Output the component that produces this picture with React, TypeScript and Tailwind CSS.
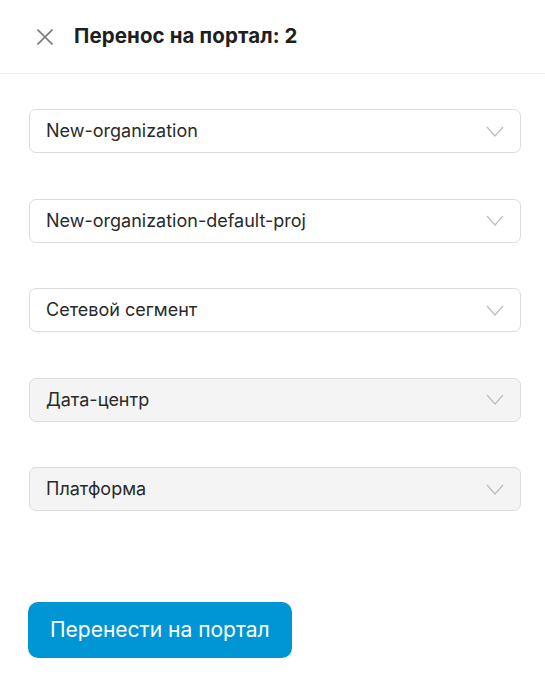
type Field = {
  label: string;
  disabled?: boolean;
};

const fields: Field[] = [
  { label: "New-organization" },
  { label: "New-organization-default-proj" },
  { label: "Сетевой сегмент" },
  { label: "Дата-центр", disabled: true },
  { label: "Платформа", disabled: true },
];

function Select({ label, disabled }: Field) {
  return (
    <div
      className={
        disabled
          ? "h-[44px] w-full rounded-[7px] border border-[#dcdcdc] bg-[#f4f4f4] flex items-center justify-between pl-[16px] pr-[16px]"
          : "h-[44px] w-full rounded-[7px] border border-[#dcdcdc] bg-white flex items-center justify-between pl-[16px] pr-[16px]"
      }
    >
      <span className="text-[18px] text-[#2a2a2a] leading-none">{label}</span>
      <svg width="18" height="11" viewBox="0 0 18 11" fill="none" className="shrink-0">
        <path d="M1 1l8 9 8-9" stroke="#bdbdbd" strokeWidth="1.2" />
      </svg>
    </div>
  );
}

function App() {
  return (
    <div className="min-h-[691px] w-[545px] bg-white font-['Inter','Liberation_Sans',sans-serif]">
      <div className="h-[74px] border-b border-[#ededed] flex items-center pl-[37px] gap-[21px]">
        <svg width="16" height="16" viewBox="0 0 16 16" fill="none" className="shrink-0">
          <path d="M0.5 0.5l15 15M15.5 0.5l-15 15" stroke="#7a7a7a" strokeWidth="1.6" />
        </svg>
        <h1 className="text-[20.5px] font-bold text-[#1f1f1f] tracking-[0.1px]">Перенос на портал: 2</h1>
      </div>

      <div className="flex flex-col gap-[45.5px] px-[29px] pr-[24px] pt-[35px]">
        {fields.map((f) => (
          <Select key={f.label} {...f} />
        ))}
      </div>

      <div className="px-[28px] pt-[91px]">
        <button
          type="button"
          className="h-[56px] rounded-[10px] bg-[#0096d6] px-[22px] text-[21px] text-white"
        >
          Перенести на портал
        </button>
      </div>
    </div>
  );
}

export default App;
